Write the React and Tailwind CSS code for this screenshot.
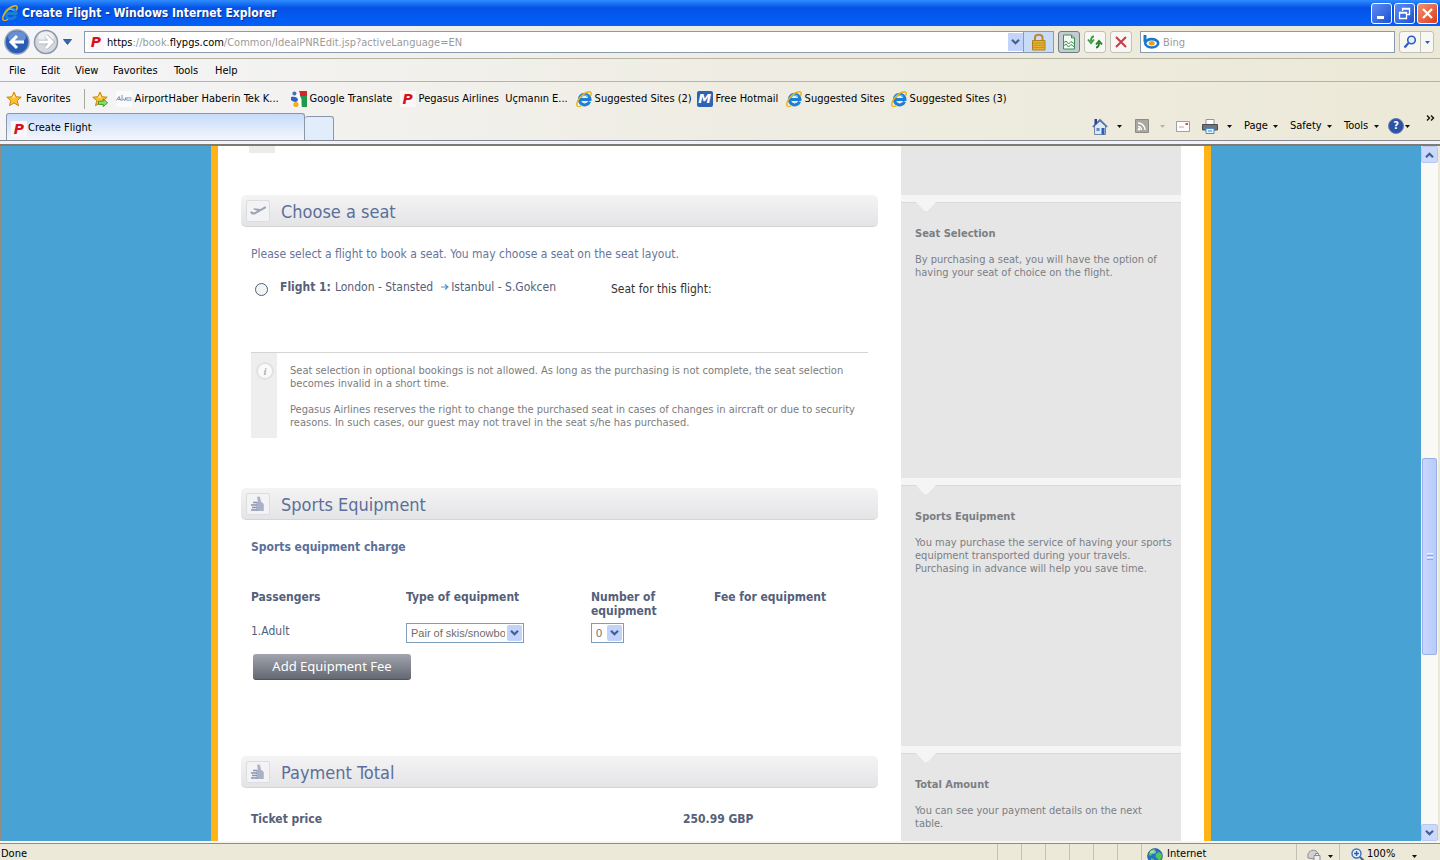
import React, { useState } from 'react';

const bookmarks = [
  { id: 1, icon: 'airport', label: 'AirportHaber Haberin Tek K...', width: 'w-[175px]' },
  { id: 2, icon: 'google', label: 'Google Translate', width: 'w-[109px]' },
  { id: 3, icon: 'pegasus', label: 'Pegasus Airlines  Uçmanın E...', width: 'w-[176px]' },
  { id: 4, icon: 'ie', label: 'Suggested Sites (2)', width: 'w-[121px]' },
  { id: 5, icon: 'hotmail', label: 'Free Hotmail', width: 'w-[89px]' },
  { id: 6, icon: 'ie', label: 'Suggested Sites', width: 'w-[105px]' },
  { id: 7, icon: 'ie', label: 'Suggested Sites (3)', width: 'w-[121px]' },
];

const menus = [
  { name: 'File', width: 'w-8' },
  { name: 'Edit', width: 'w-[34px]' },
  { name: 'View', width: 'w-[38px]' },
  { name: 'Favorites', width: 'w-[61px]' },
  { name: 'Tools', width: 'w-[41px]' },
  { name: 'Help', width: 'w-8' },
];

/* ---------- Icons ---------- */

function IeIcon() {
  return (
    <svg viewBox="0 0 16 16" className="w-4 h-4 shrink-0">
      <path d="M13.6 10.6A5.3 5.3 0 1 1 14 8.6H5" fill="none" stroke="#1c7fd6" strokeWidth="3" />
      <path d="M4.4 6.8A4.6 4.6 0 0 1 12 5.6" fill="none" stroke="#62c3f5" strokeWidth="1.2" />
      <path d="M1.4 15.2C-.6 12.6 3 6 8.6 2.4 11.8.4 15 .2 15.2 2.2c.1 1-.4 2-1 2.9" fill="none" stroke="#e9b51c" strokeWidth="1.5" />
      <path d="M1.4 15.2c1 .8 2.8.2 4.6-.9" fill="none" stroke="#e9b51c" strokeWidth="1.3" />
    </svg>
  );
}

function PegasusIcon() {
  return (
    <span className="flex w-4 h-4 shrink-0 items-center justify-center bg-[#fbf7f6] font-['DejaVu_Sans',sans-serif] text-[14px] leading-4 font-bold italic text-[#d3121c]">
      P
    </span>
  );
}

function BookmarkIcon({ type }) {
  if (type === 'ie') return <IeIcon />;
  if (type === 'pegasus') return <PegasusIcon />;
  if (type === 'hotmail') {
    return (
      <span className="flex w-4 h-4 shrink-0 items-center justify-center rounded-xs bg-[#2f62b5] font-['DejaVu_Sans',sans-serif] text-[13px] leading-4 font-bold italic text-white">
        M
      </span>
    );
  }
  if (type === 'google') {
    return (
      <svg viewBox="0 0 16 16" className="w-4 h-4 shrink-0">
        <path d="M8 0h8v5H9z" fill="#d8232a" />
        <path d="M9 5h7v11h-5L8 8z" fill="#1f9a4c" />
        <path d="M8.500 1 5 4l3 3-2 3 3 5h1.500V8L9 5z" fill="#fff" />
        <circle cx="3.4" cy="2.6" r="2" fill="#3b6fd0" />
        <path d="M0 6c3-1 7 0 7 3-1 3-5 2-7 0z" fill="#2b62c8" />
        <circle cx="5" cy="13.4" r="2.6" fill="#f2b01e" />
      </svg>
    );
  }
  return (
    <svg viewBox="0 0 16 16" className="w-4 h-4 shrink-0">
      <path d="M0 0h16v16H0z" fill="#fbfbfb" />
      <path d="M.5 9.5 3 5.5l1.5 4M2 8.5h2.5M6 4v6M7 7.5l1.5 2 1.5-3v3" fill="none" stroke="#6a86ad" strokeWidth=".9" />
      <path d="M11 6.5h4v3h-4zM11 8h4" fill="none" stroke="#9db0c9" strokeWidth=".8" />
    </svg>
  );
}

function StarIcon({ add }) {
  return (
    <svg viewBox="0 0 16 16" className="w-4 h-4 shrink-0">
      <path d="m8 1 2 4.8 5.2.4-4 3.4 1.3 5.1L8 11.9l-4.5 2.8 1.3-5.1-4-3.4L6 5.8z" fill="#fcc32c" stroke="#c98312" strokeWidth="1" strokeLinejoin="round" />
      <path d="M8 3.4 9.2 6.8H5.8z" fill="#fff1a8" />
      {add && <path d="M6.5 10.2h4.7V8l4.4 3.8-4.4 3.8v-2.2H6.5z" fill="#8fdc6c" stroke="#2c9a2a" strokeWidth=".9" />}
    </svg>
  );
}

function Caret({ light }) {
  return (
    <svg viewBox="0 0 5 3" className="w-[5px] h-[3px] shrink-0">
      <path d="M0 0h5L2.5 3z" fill={light ? '#b9b5a6' : '#111'} />
    </svg>
  );
}

function Chevron() {
  return (
    <svg viewBox="0 0 9 6" className="w-[9px] h-[6px] shrink-0">
      <path d="m1 .8 3.5 3.5L8 .8" fill="none" stroke="#43608f" strokeWidth="2.2" />
    </svg>
  );
}

function GlobeIcon() {
  return (
    <svg viewBox="0 0 16 16" className="w-4 h-4 shrink-0">
      <circle cx="8" cy="8" r="7.4" fill="#2372c8" stroke="#1b4f8c" strokeWidth=".7" />
      <path d="M3 3c2-2 4.5-2 5.500-1.400L7 4.500l-2 1L4 8 1.500 7zM9 6l3-2 2.600 2L15 9l-2.500 4-2-2.500L8.500 9zM4 10l3 1-.5 3.500L4 13z" fill="#56c653" />
      <ellipse cx="6" cy="4" rx="3" ry="1.800" fill="#fff" opacity=".45" />
    </svg>
  );
}

function PlaneIcon() {
  return (
    <svg viewBox="0 0 18 12" className="w-[18px] h-3">
      <path d="M1 7.200 2.200 6.300 5 7.400l3.200-1.700L4 4.200l1.400-.9 6.200.6 3-1.900c1.200-.7 2.700-.6 2.600.2-.1.800-1.300 1.600-2.200 2.100L5.800 9.600 3 9.500z" fill="#9da5b4" />
    </svg>
  );
}

function ThumbIcon() {
  return (
    <svg viewBox="0 0 16 16" className="w-4 h-4">
      <path d="M6.500 15V6.500l1.300-1L7.200 1.200C7.200.2 9.800.2 10.200 1.800l.8 4 2 1.500c.6.400.8.900.8 1.500V15z" fill="#a9b1c6" />
      <path d="M3 6.500h4M1 9h6M2 11.500h5M1 14h6.500" stroke="#8892af" strokeWidth="1.400" />
    </svg>
  );
}

/* ---------- Browser chrome ---------- */

function TitleBar() {
  return (
    <div className="flex h-[26px] shrink-0 items-center justify-between bg-linear-to-b from-[#2f8bff] via-[#0453e6] via-30% to-[#0460f8] px-[2px]">
      <div className="flex items-center gap-1">
        <IeIcon />
        <h1 className="text-[12px] leading-4 font-bold text-white [text-shadow:1px_1px_1px_#0a2f8c]">
          Create Flight - Windows Internet Explorer
        </h1>
      </div>
      <div className="flex gap-[2px]">
        <button aria-label="Minimize" className="flex w-[21px] h-[21px] items-center justify-center rounded-[3px] border border-white bg-linear-to-br from-[#5f8df2] to-[#1d4fd2]">
          <svg viewBox="0 0 13 13" className="w-[13px] h-[13px]"><path d="M2 9h7v3H2z" fill="#fff" /></svg>
        </button>
        <button aria-label="Restore" className="flex w-[21px] h-[21px] items-center justify-center rounded-[3px] border border-white bg-linear-to-br from-[#5f8df2] to-[#1d4fd2]">
          <svg viewBox="0 0 13 13" className="w-[13px] h-[13px]">
            <path d="M4.500 4V1.500h7v6H9M4 2h8M1.500 5.500h7v6h-7zM1 6h8" fill="none" stroke="#fff" strokeWidth="1.300" />
          </svg>
        </button>
        <button aria-label="Close" className="flex w-[21px] h-[21px] items-center justify-center rounded-[3px] border border-white bg-linear-to-br from-[#f0906f] to-[#d63a12]">
          <svg viewBox="0 0 13 13" className="w-[13px] h-[13px]"><path d="m2 2 9 9m0-9-9 9" stroke="#fff" strokeWidth="2.200" /></svg>
        </button>
      </div>
    </div>
  );
}

function NavBar() {
  return (
    <div className="flex h-8 shrink-0 items-center pl-1 pr-[6px]">
      <div className="flex w-20 items-center">
        <button aria-label="Back">
          <svg viewBox="0 0 26 26" className="w-[26px] h-[26px]">
            <circle cx="13" cy="13" r="12" fill="#2b5cb4" stroke="#93a0b8" strokeWidth="1.500" />
            <ellipse cx="13" cy="8" rx="9" ry="6" fill="#8fb0e6" opacity=".6" />
            <path d="M20 13H7.500M13 7l-6 6 6 6" fill="none" stroke="#fff" strokeWidth="3" />
          </svg>
        </button>
        <button aria-label="Forward" className="ml-[3px]">
          <svg viewBox="0 0 26 26" className="w-[26px] h-[26px]">
            <circle cx="13" cy="13" r="11.500" fill="#d5d8de" stroke="#8e98a8" strokeWidth="1.500" />
            <ellipse cx="13" cy="8" rx="8" ry="5.500" fill="#f4f5f7" opacity=".8" />
            <path d="M6 13h12.500M13 7l6 6-6 6" fill="none" stroke="#a9afba" strokeWidth="4.500" />
            <path d="M6 13h12.500M13 7l6 6-6 6" fill="none" stroke="#fff" strokeWidth="3" />
          </svg>
        </button>
        <button aria-label="Recent pages" className="ml-1">
          <svg viewBox="0 0 9 6" className="w-[9px] h-[6px]"><path d="M.5.500h8L4.500 5.500z" fill="#2f6cb5" stroke="#1d4a86" strokeWidth=".8" /></svg>
        </button>
      </div>

      <div className="relative flex h-[22px] flex-1 items-center border border-[#8b9bae] bg-white pl-[3px]">
        <PegasusIcon />
        <input
          aria-label="Address"
          defaultValue="https://book.flypgs.com/Common/IdealPNREdit.jsp?activeLanguage=EN"
          className="h-full min-w-0 flex-1 bg-transparent pt-[3px] pl-[3px] text-transparent caret-black outline-none"
        />
        <div aria-hidden="true" className="pointer-events-none absolute left-[22px] pt-[3px] whitespace-nowrap text-[#9b9b9b]">
          <span className="text-black">https</span>://book.<span className="text-black">flypgs.com</span>/Common/IdealPNREdit.jsp?activeLanguage=EN
        </div>
        <button aria-label="Show addresses" className="flex w-[15px] h-[18px] items-center justify-center bg-[#c3d3fb]"><Chevron /></button>
        <button aria-label="Security report" className="flex w-[30px] h-full items-center justify-center border-l border-[#8b9bae] bg-[#c8dcf8]">
          <svg viewBox="0 0 16 18" className="w-4 h-[18px]">
            <path d="M4 8V4.500C4 .8 11.500.8 11.500 4.500V8" fill="none" stroke="#b98a2c" strokeWidth="2" />
            <path d="M1.500 7.500h12.500v9.500H1.500z" fill="#e8b234" stroke="#b0801c" />
            <path d="M2 10h11.500M2 12.300h11.500M2 14.600h11.500" stroke="#bd8b1f" strokeWidth=".9" />
          </svg>
        </button>
      </div>

      <div className="ml-1 mr-2 flex gap-1">
        <button aria-label="Compatibility view" className="flex w-[22px] h-[22px] items-center justify-center rounded-[3px] border border-[#6d7c86] bg-[#c2ccd2]">
          <svg viewBox="0 0 14 16" className="w-[14px] h-4">
            <path d="M1.500 1h8L12.500 4v11h-11z" fill="#f3faf2" stroke="#3f8f57" />
            <path d="M9.500 1v3h3M1.500 9 4 7l2.500 3L9 7.500l3.500 2.500M1.500 12 4 10l2.500 3L9 10.500l3.500 2.500" fill="none" stroke="#3f8f57" />
          </svg>
        </button>
        <button aria-label="Refresh" className="flex w-[22px] h-[22px] items-center justify-center rounded-[3px] border border-[#c3c1b6] bg-[#f7f7f4]">
          <svg viewBox="0 0 16 14" className="w-4 h-[14px]">
            <path d="M7 1.500C5 1.500 4 2.500 4 6M1 4.500l3 3.500 3-3.500" fill="none" stroke="#3c9e3f" strokeWidth="1.900" />
            <path d="M9 12.500c2 0 3-1 3-4.500M9 9.500 12 6l3 3.500" fill="none" stroke="#257a2b" strokeWidth="1.900" />
          </svg>
        </button>
        <button aria-label="Stop" className="flex w-[22px] h-[22px] items-center justify-center rounded-[3px] border border-[#c3c1b6] bg-[#f7f7f4]">
          <svg viewBox="0 0 12 12" className="w-3 h-3"><path d="m1 1 10 10m0-10L1 11" stroke="#c93b45" strokeWidth="2" /></svg>
        </button>
      </div>

      <div className="flex h-[22px] w-[255px] items-center border border-[#8b9bae] bg-white pl-[2px]">
        <svg viewBox="0 0 17 14" className="w-[17px] h-[14px] shrink-0">
          <path d="M2 0v7" stroke="#1b79c9" strokeWidth="3" />
          <ellipse cx="8.700" cy="8.300" rx="6.500" ry="4.200" fill="#fff" stroke="#1b79c9" strokeWidth="2.600" />
          <ellipse cx="8.700" cy="8.300" rx="3" ry="2.200" fill="#f19a1e" />
        </svg>
        <input aria-label="Search" placeholder="Bing" className="min-w-0 flex-1 pt-[3px] pl-[3px] outline-none placeholder:text-[#9b9b9b]" />
      </div>
      <div className="ml-1 flex h-[22px] w-[35px] rounded-[3px] border border-[#c3c1b6] bg-[#f7f7f4]">
        <button aria-label="Run search" className="flex flex-1 items-center justify-center border-r border-[#c3c1b6]">
          <svg viewBox="0 0 14 14" className="w-[14px] h-[14px]">
            <circle cx="8.500" cy="5" r="3.800" fill="#e4eefc" stroke="#2d5dc4" strokeWidth="1.600" />
            <path d="M5.500 8 1.500 12.500" stroke="#2d5dc4" strokeWidth="2.200" />
          </svg>
        </button>
        <button aria-label="Search options" className="flex w-3 items-center justify-center">
          <svg viewBox="0 0 5 3" className="w-[5px] h-[3px]"><path d="M0 0h5L2.500 3z" fill="#2d5dc4" /></svg>
        </button>
      </div>
    </div>
  );
}

function CommandBar() {
  return (
    <div className="flex h-7 items-center pr-[5px]">
      <button aria-label="Home">
        <svg viewBox="0 0 16 17" className="w-4 h-[17px]">
          <path d="M2.500 8v8.500h11V8L8 3z" fill="#dfe8f5" stroke="#7185ab" />
          <path d="M.8 9 8 1.800 15.200 9" fill="none" stroke="#5470a8" strokeWidth="1.600" />
          <path d="M2.500 1h2.500v4l-2.500 2z" fill="#2a3fa0" />
          <path d="M9.500 10h3v6.500h-3z" fill="#2860b4" />
          <path d="M4.500 10h3v3h-3z" fill="#5a87c7" />
        </svg>
      </button>
      <span className="ml-[9px]"><Caret /></span>
      <button aria-label="Feeds" className="ml-[13px]">
        <svg viewBox="0 0 14 14" className="w-[14px] h-[14px]">
          <path d="M.5.500h13v13H.5z" fill="#a9a7a0" stroke="#8d8b84" />
          <path d="M3 7.500A3.500 3.500 0 0 1 6.500 11M3 4a7 7 0 0 1 7 7" fill="none" stroke="#fff" strokeWidth="1.500" />
          <circle cx="4" cy="10.200" r="1.200" fill="#fff" />
        </svg>
      </button>
      <span className="ml-[11px]"><Caret light /></span>
      <button aria-label="Read mail" className="ml-[11px]">
        <svg viewBox="0 0 14 11" className="w-[14px] h-[11px]">
          <path d="M.5.500h13v10H.5z" fill="#fdfdfd" stroke="#98a0aa" />
          <path d="M9.500 2h2.500v2H9.500z" fill="#d84d3c" />
          <path d="M3 6h5" stroke="#c9a3a0" />
        </svg>
      </button>
      <button aria-label="Print" className="ml-3">
        <svg viewBox="0 0 16 15" className="w-4 h-[15px]">
          <path d="M4 .500h8V6H4z" fill="#fff" stroke="#9098a0" />
          <path d="M.5 5.500h15V11H.5z" fill="#6e747c" stroke="#484d54" />
          <path d="M4 9.500h8v5H4z" fill="#eaf3fb" stroke="#4c8cc8" />
          <path d="M6 12h4" stroke="#3f83c6" />
        </svg>
      </button>
      <span className="ml-[9px]"><Caret /></span>
      <button className="ml-3 flex w-[34px] items-center justify-between">Page<Caret /></button>
      <button className="ml-3 flex w-[42px] items-center justify-between">Safety<Caret /></button>
      <button className="ml-3 flex w-[35px] items-center justify-between">Tools<Caret /></button>
      <button aria-label="Help" className="ml-[9px] flex items-center gap-px">
        <span className="flex w-4 h-4 items-center justify-center rounded-full border border-[#6d7fa8] bg-[#2b52a8] text-[11px] font-bold text-white">?</span>
        <Caret />
      </button>
      <button aria-label="More commands" className="mb-4 ml-4">
        <svg viewBox="0 0 9 6" className="w-[9px] h-[6px]"><path d="m1 .500 2.500 2.500L1 5.500M5 .500 7.500 3 5 5.500" fill="none" stroke="#111" strokeWidth="1.400" /></svg>
      </button>
    </div>
  );
}

function BrowserTop() {
  return (
    <header className="shrink-0 bg-linear-to-r from-[#f5f5f8] via-[#efede3] to-[#ece9d8]">
      <NavBar />
      <nav className="flex h-6 items-center border-y border-[#b5b5a6] pt-[3px] pl-[9px]">
        {menus.map((menu) => (
          <button key={menu.name} className={`${menu.width} text-left`}>{menu.name}</button>
        ))}
      </nav>
      <div className="flex h-[31px] items-center pt-[3px] pl-[6px]">
        <button className="flex items-center gap-1"><StarIcon />Favorites</button>
        <span className="ml-[13px] h-5 w-px bg-[#a9a99c]" />
        <button aria-label="Add to favorites" className="ml-[7px] mr-2"><StarIcon add /></button>
        {bookmarks.map((item) => (
          <a key={item.id} href="#" className={`${item.width} flex shrink-0 items-center gap-[3px] whitespace-pre`}>
            <BookmarkIcon type={item.icon} />
            {item.label}
          </a>
        ))}
      </div>
      <div className="flex h-7 items-end justify-between border-b border-[#85888f] pl-[6px]">
        <div className="flex items-end">
          <button className="flex h-[27px] w-[299px] items-center gap-px rounded-t-[3px] border border-b-0 border-[#8a97a8] bg-linear-to-b from-[#c6dcfa] to-[#f4f6fc] pt-[3px] pl-[4px]">
            <PegasusIcon />
            Create Flight
          </button>
          <button aria-label="New tab" className="h-6 w-[29px] rounded-t-[3px] border border-b-0 border-l-0 border-[#8a97a8] bg-[#e2edfb]" />
        </div>
        <CommandBar />
      </div>
      <div className="h-[5px] border-b-2 border-[#7d7b74] bg-[#f1f2fa]" />
    </header>
  );
}

function ScrollBar() {
  return (
    <div className="flex w-[19px] shrink-0 flex-col border-r-2 border-[#ece9d8] bg-[#f9f9f5]">
      <button aria-label="Scroll up" className="flex h-[17px] items-center justify-center rounded-xs border border-[#b7c9f3] bg-[#cbd9fc]">
        <span className="rotate-180"><Chevron /></span>
      </button>
      <div className="flex-[295]" />
      <div className="mx-px flex h-[197px] flex-col items-center justify-center gap-px rounded-xs border border-[#98b0e8] bg-linear-to-r from-[#c9d8fd] to-[#b9cafa]">
        <span className="h-px w-[6px] bg-[#eef3ff]" />
        <span className="h-px w-[6px] bg-[#8ca9e8]" />
        <span className="h-px w-[6px] bg-[#eef3ff]" />
        <span className="h-px w-[6px] bg-[#8ca9e8]" />
      </div>
      <div className="flex-[169]" />
      <button aria-label="Scroll down" className="flex h-[17px] items-center justify-center rounded-xs border border-[#b7c9f3] bg-[#cbd9fc]">
        <Chevron />
      </button>
    </div>
  );
}

function StatusBar() {
  return (
    <footer className="h-[19px] shrink-0 overflow-hidden border-t-2 border-[#f7f6f0] bg-[#ece9d8]">
      <div className="flex border-t border-[#8f8d83] leading-3">
        <span className="flex-1 pt-1 pl-px">Done</span>
        <div className="flex h-4 shrink-0">
          {[1, 2, 3, 4, 5, 6].map((cell) => (
            <span key={cell} className="w-6 border-l border-[#c5c2b3]" />
          ))}
          <span className="flex w-[155px] items-start gap-1 border-l border-[#c5c2b3] pt-1 pl-[5px]"><GlobeIcon />Internet</span>
          <span className="flex w-[43px] items-start gap-[6px] border-l border-[#c5c2b3] pt-1 pl-[9px]">
            <svg viewBox="0 0 16 16" className="w-4 h-4">
              <path d="M2 6C4 1 11 1 12 6l-3 5-7-1z" fill="#d2d2d2" stroke="#8e8e8e" />
              <path d="M8 13V7.500h6V13zM9.500 7.500V5.500h3v2" fill="#eee" stroke="#8e8e8e" />
            </svg>
            <span className="flex h-3 items-center pt-1"><Caret /></span>
          </span>
          <button className="flex w-[101px] items-start gap-[2px] border-l border-[#c5c2b3] pt-1 pl-[11px]">
            <svg viewBox="0 0 14 14" className="w-[14px] h-[14px]">
              <circle cx="5.500" cy="5.500" r="4.500" fill="#e8f3ff" stroke="#3a72b8" strokeWidth="1.400" />
              <path d="M5.500 3v5M3 5.500h5" stroke="#2a62ad" strokeWidth="1.500" />
              <path d="m9 9 4 4" stroke="#4d5f80" strokeWidth="2" />
            </svg>
            <span className="w-[43px] text-left">100%</span>
            <span className="flex h-3 items-center pt-1"><Caret /></span>
          </button>
        </div>
      </div>
    </footer>
  );
}

/* ---------- Page ---------- */

function SectionHeader({ icon, title }) {
  return (
    <div className="flex h-8 items-center rounded-[5px] border-b border-[#d3d4d6] bg-linear-to-b from-[#f4f4f5] to-[#e4e4e6] pl-[5px]">
      <span className="flex w-6 h-[22px] items-center justify-center rounded-xs border border-[#dcdde0] bg-[#f3f3f5]">{icon}</span>
      <h2 className="ml-[11px] pt-[3px] text-[18px] leading-6 text-[#5b7099]">{title}</h2>
    </div>
  );
}

function SelectBox({ label, options, className }) {
  return (
    <div className={`relative ${className}`}>
      <select
        aria-label={label}
        className="h-5 w-full appearance-none border border-[#7f9db9] bg-white pl-1 pr-[18px] font-['Liberation_Sans',Arial,sans-serif] text-[11px] text-[#6d6d6d] outline-none"
      >
        {options.map((option) => (
          <option key={option}>{option}</option>
        ))}
      </select>
      <span className="pointer-events-none absolute top-[2px] right-[2px] flex w-[15px] h-4 items-center justify-center rounded-xs bg-[#c1d2fb]">
        <Chevron />
      </span>
    </div>
  );
}

function SidePanel({ title, children, className }) {
  return (
    <section className={`relative border-t border-[#d9d9d9] bg-[#e6e6e6] pt-[23px] pr-2 pl-[14px] text-[#7b7e84] ${className}`}>
      <svg viewBox="0 0 20 10" className="absolute -top-px left-[15px] w-5 h-[10px]">
        <path d="M0 0h20l-8 8.500q-2 1.500-4 0z" fill="#f5f5f5" />
      </svg>
      <h3 className="leading-4 font-bold">{title}</h3>
      <p className="mt-[11px] leading-[13px]">{children}</p>
    </section>
  );
}

function BookingPage() {
  const [flight, setFlight] = useState('');

  return (
    <div className="min-w-0 flex-1 overflow-hidden border-l border-[#8f8d83] bg-[#48a2d3]">
      <div className="mx-auto flex h-full w-[1000px] items-start overflow-hidden border-x-[7px] border-[#ffb316] bg-white pl-[23px]">
        <main className="w-[637px] text-[12px] text-[#55607a]">
          <div className="ml-2 h-[7px] w-[26px] bg-[#ececec]" />

          {/* Seat */}
          <section className="mt-[42px]">
            <SectionHeader icon={<PlaneIcon />} title="Choose a seat" />
            <div className="px-[10px]">
              <p className="mt-[19px] leading-4 text-[#66759b]">
                Please select a flight to book a seat. You may choose a seat on the seat layout.
              </p>
              <div className="mt-[17px] flex items-start leading-4">
                <input
                  id="flight-1"
                  type="radio"
                  name="flight"
                  checked={flight === '1'}
                  onChange={() => setFlight('1')}
                  className="mt-1 ml-1 w-[13px] h-[13px] appearance-none rounded-full border border-[#4b6180] bg-[#f4f5f3] checked:bg-[#4fae3c]"
                />
                <label htmlFor="flight-1" className="ml-3 flex w-[331px] items-center">
                  <b className="mr-1">Flight 1:</b>London - Stansted
                  <svg viewBox="0 0 8 6" className="ml-2 mr-[2px] w-2 h-[6px]">
                    <path d="M0 3h6M4 .500 7 3 4 5.500" fill="none" stroke="#4d8bc4" strokeWidth="1.100" />
                  </svg>
                  Istanbul - S.Gokcen
                </label>
                <span className="mt-[2px] text-[#333]">Seat for this flight:</span>
              </div>
              <div className="mt-[55px] flex border-t border-[#d4d4d4] text-[11px] leading-[13px] text-[#7c7c7c]">
                <div className="w-[26px] shrink-0 bg-[#eeeeee] pt-[9px] pl-[5px]">
                  <span className="flex w-[18px] h-[18px] items-center justify-center rounded-full border-2 border-[#e2e2e2] bg-[#fafafa] font-['Liberation_Serif',serif] text-[11px] font-bold italic text-[#b0b0b0]">
                    i
                  </span>
                </div>
                <div className="pt-[11px] pr-2 pb-[9px] pl-[13px]">
                  <p>
                    Seat selection in optional bookings is not allowed. As long as the purchasing is not complete, the seat selection
                    becomes invalid in a short time.
                  </p>
                  <p className="mt-[13px]">
                    Pegasus Airlines reserves the right to change the purchased seat in cases of changes in aircraft or due to security
                    reasons. In such cases, our guest may not travel in the seat s/he has purchased.
                  </p>
                </div>
              </div>
            </div>
          </section>

          {/* Sports equipment */}
          <section className="mt-[50px]">
            <SectionHeader icon={<ThumbIcon />} title="Sports Equipment" />
            <div className="px-[10px]">
              <h3 className="mt-[19px] leading-4 font-bold text-[#5b7099]">Sports equipment charge</h3>
              <table className="mt-[35px] w-full table-fixed border-collapse text-left leading-[14px]">
                <thead>
                  <tr className="align-top">
                    <th className="w-[155px]">Passengers</th>
                    <th className="w-[185px]">Type of equipment</th>
                    <th className="w-[123px] pr-10">Number of equipment</th>
                    <th>Fee for equipment</th>
                  </tr>
                </thead>
                <tbody>
                  <tr className="align-top">
                    <td className="pt-[6px]">1.Adult</td>
                    <td className="pt-[5px]">
                      <SelectBox label="Type of equipment" options={['Pair of skis/snowboard', 'Golf equipment']} className="w-[118px]" />
                    </td>
                    <td className="pt-[5px]">
                      <SelectBox label="Number of equipment" options={['0', '1', '2']} className="w-[33px]" />
                    </td>
                    <td />
                  </tr>
                </tbody>
              </table>
              <button className="mt-[11px] ml-[2px] h-[26px] w-[158px] rounded-[3px] border-b border-[#50545e] bg-linear-to-b from-[#a2a5ad] to-[#636873] font-['Noto_Sans',sans-serif] text-[13px] text-white">
                Add Equipment Fee
              </button>
            </div>
          </section>

          {/* Payment */}
          <section className="mt-[76px]">
            <SectionHeader icon={<ThumbIcon />} title="Payment Total" />
            <div className="mt-[23px] flex px-[10px] leading-4 font-bold">
              <span className="w-[432px]">Ticket price</span>
              <span>250.99 GBP</span>
            </div>
          </section>
        </main>

        <aside className="ml-[23px] w-[280px] bg-[#f5f5f5]">
          <div className="mb-[7px] h-[49px] bg-[#e6e6e6]" />
          <SidePanel title="Seat Selection" className="mb-[7px] h-[276px]">
            By purchasing a seat, you will have the option of having your seat of choice on the flight.
          </SidePanel>
          <SidePanel title="Sports Equipment" className="mb-[7px] h-[261px]">
            You may purchase the service of having your sports equipment transported during your travels. Purchasing in advance will help you save time.
          </SidePanel>
          <SidePanel title="Total Amount" className="h-[276px]">
            You can see your payment details on the next<br />table.
          </SidePanel>
        </aside>
      </div>
    </div>
  );
}

export default function App() {
  return (
    <div className="flex h-screen flex-col overflow-hidden bg-[#ece9d8] font-['DejaVu_Sans_Condensed','Noto_Sans',sans-serif] text-[11px] text-black">
      <TitleBar />
      <BrowserTop />
      <div className="flex min-h-0 flex-1">
        <BookingPage />
        <ScrollBar />
      </div>
      <StatusBar />
    </div>
  );
}
